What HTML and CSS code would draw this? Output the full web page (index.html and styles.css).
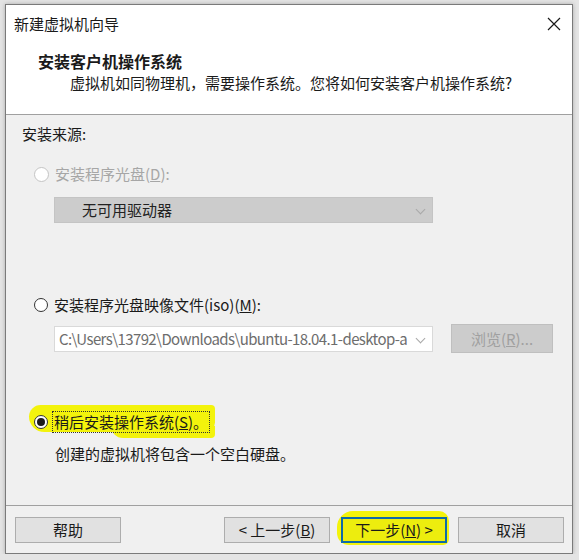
FILE: index.html
```html
<!DOCTYPE html>
<html lang="zh-CN">

<head>
    <meta charset="UTF-8">
    <meta name="viewport" content="width=device-width, initial-scale=1.0">
    <title>新建虚拟机向导</title>
    <link rel="stylesheet" href="styles.css">
</head>

<body>
    <div id="wizard">
        <div class="title-bar">
            <span class="title-text">新建虚拟机向导</span>
            <svg class="close-icon" width="14" height="14" viewBox="0 0 14 14">
                <path d="M1 1 L13 13 M13 1 L1 13" stroke="#1a1a1a" stroke-width="1.2" fill="none" />
            </svg>
        </div>

        <div class="header">
            <div class="header-title">安装客户机操作系统</div>
            <div class="header-sub">虚拟机如同物理机，需要操作系统。您将如何安装客户机操作系统?</div>
        </div>

        <div class="content">
            <div class="section-label">安装来源:</div>

            <div class="radio-row disabled row-disc">
                <span class="radio"></span>
                <span>安装程序光盘(<u>D</u>):</span>
            </div>
            <div class="combo combo-disc">
                <span class="combo-text">无可用驱动器</span>
                <span class="chevron"></span>
            </div>

            <div class="radio-row row-iso">
                <span class="radio"></span>
                <span>安装程序光盘映像文件(iso)(<u>M</u>):</span>
            </div>
            <div class="iso-row">
                <div class="combo combo-iso">
                    <span class="combo-text">C:\Users\13792\Downloads\ubuntu-18.04.1-desktop-a</span>
                    <span class="chevron"></span>
                </div>
                <div class="browse-btn">浏览(<u>R</u>)...</div>
            </div>

            <div class="radio-row row-later">
                <span class="marker marker-later"></span>
                <span class="radio checked"></span>
                <span class="focus-label">稍后安装操作系统(<u>S</u>)。</span>
            </div>
            <div class="note">创建的虚拟机将包含一个空白硬盘。</div>
        </div>

        <div class="footer">
            <div class="btn">帮助</div>
            <div class="spacer"></div>
            <div class="btn">&lt; 上一步(<u>B</u>)</div>
            <div class="btn-wrap">
                <span class="marker marker-next"></span>
                <div class="btn btn-default">下一步(<u>N</u>) &gt;</div>
            </div>
            <div class="btn btn-cancel">取消</div>
        </div>
    </div>
</body>

</html>
```

FILE: styles.css
```css
body {
    margin: 0;
    padding: 4px 0 0 5px;
    background-color: #e4e4e4;
    font-family: "Noto Sans CJK SC", "Noto Sans", sans-serif;
    font-size: 15px;
    color: #1a1a1a;
}

#wizard {
    box-sizing: border-box;
    width: 568px;
    height: 550px;
    border: 1px solid #7a7a7a;
    box-shadow: 0 0 4px rgba(0, 0, 0, 0.25);
    background-color: #fff;
    display: flex;
    flex-direction: column;
}

.title-bar {
    height: 37px;
    display: flex;
    align-items: center;
    justify-content: space-between;
    padding: 0 11px 1px 8px;
    line-height: 20px;
}

.header {
    height: 71px;
    border-bottom: 1px solid #a0a0a0;
}

.header-title {
    font-weight: bold;
    font-size: 16px;
    line-height: 20px;
    padding: 8px 0 0 32px;
}

.header-sub {
    line-height: 20px;
    margin-top: 2px;
    padding-left: 64px;
}

.content {
    height: 391px;
    background-color: #f0f0f0;
    border-bottom: 1px solid #a0a0a0;
    padding: 9px 0 0 16px;
    box-sizing: border-box;
    line-height: 20px;
}

.radio-row {
    position: relative;
    display: flex;
    align-items: center;
    gap: 6px;
    margin-left: 12px;
}

.radio-row > * {
    position: relative;
    z-index: 1;
}

.radio {
    box-sizing: border-box;
    width: 14px;
    height: 14px;
    border: 1px solid #333;
    border-radius: 50%;
    background-color: #fff;
    display: flex;
    align-items: center;
    justify-content: center;
}

.radio.checked::after {
    content: "";
    width: 8px;
    height: 8px;
    border-radius: 50%;
    background-color: #1a1a1a;
}

.disabled {
    color: #a6a6a6;
}

.disabled .radio {
    width: 15px;
    height: 15px;
    border-color: #c4c4c4;
}

.row-disc {
    margin-top: 20px;
}

.combo {
    box-sizing: border-box;
    position: relative;
    display: flex;
    align-items: center;
    white-space: nowrap;
}

.combo-disc {
    width: 379px;
    height: 26px;
    margin: 13px 0 0 32px;
    background-color: #cccccc;
    border: 1px solid #c4c4c4;
    padding-left: 27px;
    color: #222;
}

.chevron {
    position: absolute;
    right: 8px;
    top: 8px;
    width: 6px;
    height: 6px;
    border-right: 1px solid #a8a8a8;
    border-bottom: 1px solid #a8a8a8;
    transform: rotate(45deg);
}

.row-iso {
    margin-top: 72px;
}

.iso-row {
    display: flex;
    align-items: center;
    margin: 9px 0 0 32px;
}

.combo-iso {
    width: 379px;
    height: 26px;
    background-color: #fff;
    border: 1px solid #d9d9d9;
    padding-left: 4px;
    color: #6d6d6d;
}

.combo-iso .combo-text {
    letter-spacing: -0.6px;
}

.browse-btn {
    box-sizing: border-box;
    width: 102px;
    height: 29px;
    margin-left: 18px;
    background-color: #cccccc;
    border: 1px solid #bfbfbf;
    color: #a0a0a0;
    display: flex;
    align-items: center;
    justify-content: center;
}

.row-later {
    margin-top: 59px;
}

.focus-label {
    outline: 1px dotted #333;
    padding: 0 1px;
    margin-left: -1px;
}

.marker {
    position: absolute;
    z-index: 0 !important;
    background-color: #f3f30c;
}

.marker-later {
    left: -5px;
    top: -7px;
    width: 186px;
    height: 27px;
    border-radius: 12px 4px 10px 16px;
}

.marker-later::after {
    content: "";
    position: absolute;
    right: 0;
    bottom: -6px;
    width: 104px;
    height: 12px;
    border-radius: 0 0 10px 30px;
    background-color: #f3f30c;
}

.note {
    margin: 12px 0 0 33px;
}

.footer {
    flex: 1;
    background-color: #f0f0f0;
    display: flex;
    align-items: flex-start;
    padding: 11px 8px 0 9px;
    gap: 10px;
}

.spacer {
    flex: 1;
}

.btn {
    box-sizing: border-box;
    width: 106px;
    height: 26px;
    background-color: #e1e1e1;
    border: 1px solid #adadad;
    display: flex;
    align-items: center;
    justify-content: center;
    line-height: 20px;
}

.btn-wrap {
    position: relative;
    margin-left: 1px;
}

.btn-default {
    position: relative;
    z-index: 1;
    border: 2px solid #0f6aa8;
    background-color: #eded0e;
}

.marker-next {
    left: -4px;
    top: -6px;
    width: 112px;
    height: 34px;
    border-radius: 16px 10px 6px 12px;
}

.btn-cancel {
    margin-left: 1px;
}
```
